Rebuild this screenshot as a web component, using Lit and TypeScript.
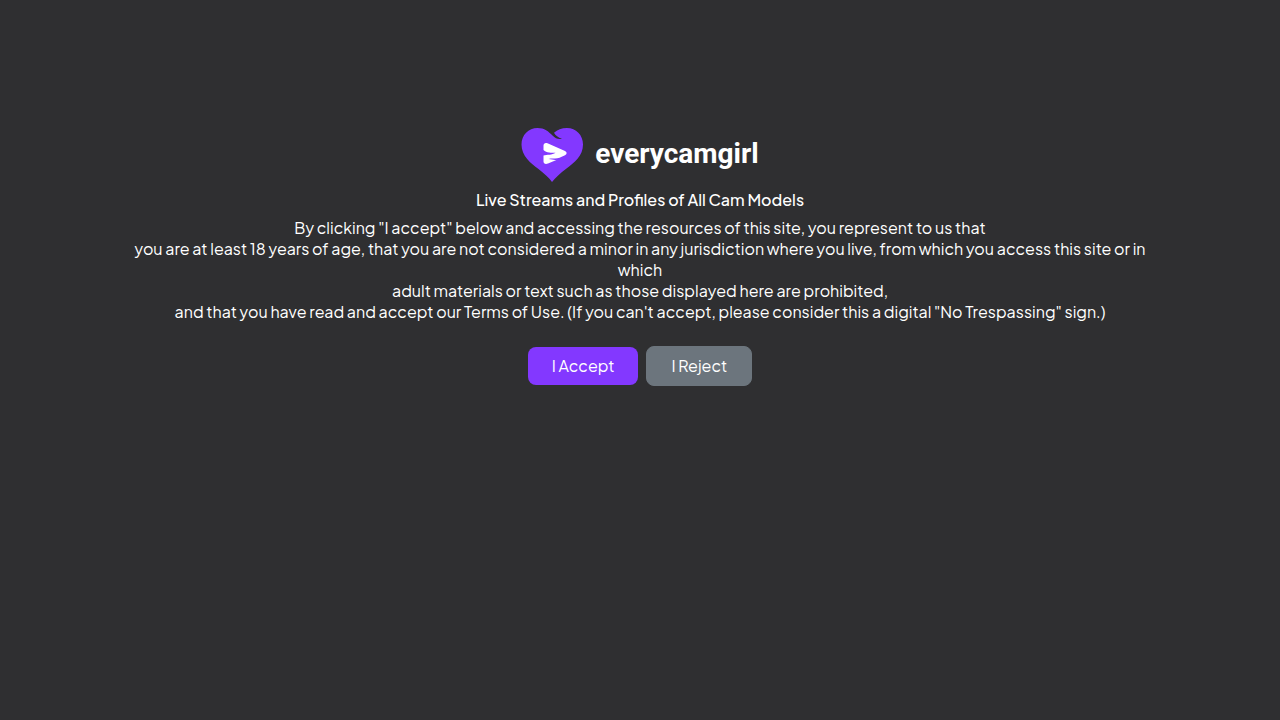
import { LitElement, html, css } from 'lit';
import { customElement } from 'lit/decorators.js';

@customElement('app-root')
export class AppRoot extends LitElement {
  static styles = css`
    :host {
      display: block;
      box-sizing: border-box;
      min-height: 100vh;
      padding: 128px 10% 32px;
      background: #2f2f31;
      color: #fff;
      font-family: 'Plus Jakarta Sans', Inter, sans-serif;
      font-size: 16px;
      line-height: 21px;
      text-align: center;
    }
    .logo {
      display: inline-flex;
      align-items: flex-start;
      gap: 12px;
      color: inherit;
      text-decoration: none;
      vertical-align: top;
    }
    .mark {
      display: block;
      width: 62px;
      height: 54px;
    }
    .wordmark {
      font-family: Roboto, sans-serif;
      font-size: 28px;
      font-weight: 700;
      line-height: 52px;
    }
    h1 {
      margin: 7px 0;
      font-size: 16px;
      font-weight: 500;
    }
    p {
      margin: 0;
    }
    .actions {
      display: flex;
      justify-content: center;
      align-items: center;
      gap: 8px;
      margin-top: 24px;
    }
    button {
      padding: 8px 24px;
      border: 0;
      border-radius: 8px;
      color: #fff;
      font: inherit;
      line-height: 22px;
      cursor: pointer;
    }
    .accept {
      background: #8338ff;
    }
    .reject {
      border: 1px solid #6c757d;
      background: #6c757d;
    }
  `;

  render() {
    return html`
      <main>
        <a class="logo" href="#">
          <svg class="mark" viewBox="0 0 62 54" aria-hidden="true">
            <path
              fill="#8338ff"
              d="M31 54C28 49.5 23.500 46 17.500 41C9.500 35 0.500 28 0.500 16.500C0.500 7 7.500 0 16.500 0C23.500 0 27.500 3.500 31.500 7.500C34.500 10.500 37 11.500 41 10.800C37 9.500 34.500 7.500 33 4.800C36.500 1.800 40.500 0 46 0C55 0 62 7 62 16.500C62 28 53.500 34.500 45.500 40.500C39 45.500 34.500 49.500 31 54Z"
            />
            <path
              fill="#fff"
              d="M22.500 17.500C22.500 15.200 24.500 14.400 26.500 15.300L44 23C46.200 24 46.200 26.200 44 27.200L38.500 29.800C35 31.200 31.500 29.800 27.500 31C31 31.300 33 32.400 36 31.800L27 35.600C24.500 36.600 22.500 35.700 22.500 33.600V27.500C26 26.500 31 27.200 34.500 24.800C30.500 24.600 25.500 25.200 22.500 22Z"
            />
          </svg>
          <span class="wordmark">everycamgirl</span>
        </a>
        <h1>Live Streams and Profiles of All Cam Models</h1>
        <p>
          By clicking "I accept" below and accessing the resources of this site, you represent to us that<br />
          you are at least 18 years of age, that you are not considered a minor in any jurisdiction where you live,
          from which you access this site or in which<br />
          adult materials or text such as those displayed here are prohibited,<br />
          and that you have read and accept our Terms of Use. (If you can't accept, please consider this a digital
          "No Trespassing" sign.)
        </p>
        <div class="actions">
          <button class="accept" type="button">I Accept</button>
          <button class="reject" type="button">I Reject</button>
        </div>
      </main>
    `;
  }
}
